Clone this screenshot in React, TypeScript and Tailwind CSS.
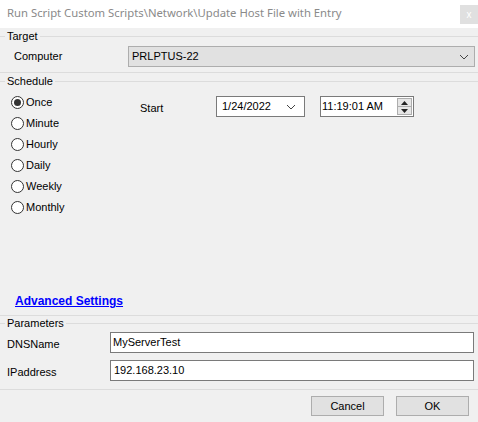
import { FC, ReactNode } from 'react';

const GroupHeader: FC<{ title: string; className?: string }> = ({ title, className = '' }) => (
  <div className={`flex h-[13px] items-center ${className}`}>
    <div className="h-px w-[5px] bg-[#dcdcdc]" />
    <span className="px-[2px] leading-none">{title}</span>
    <div className="h-px flex-1 bg-[#dcdcdc]" />
  </div>
);

const Divider: FC<{ className?: string }> = ({ className = '' }) => (
  <div className={`h-px w-full bg-[#dcdcdc] ${className}`} />
);

const Chevron: FC = () => (
  <svg width="10" height="6" viewBox="0 0 10 6" fill="none">
    <path d="M1 1l4 4 4-4" stroke="#444" strokeWidth="1" />
  </svg>
);

const Radio: FC<{ label: string; checked?: boolean }> = ({ label, checked }) => (
  <div className="flex h-[21px] items-center">
    <div className="flex h-[13px] w-[13px] items-center justify-center rounded-full border border-[#333] bg-white">
      {checked && <div className="h-[7px] w-[7px] rounded-full bg-[#333]" />}
    </div>
    <span className="ml-[2px]">{label}</span>
  </div>
);

const Button: FC<{ children: ReactNode }> = ({ children }) => (
  <div className="flex h-[20px] w-[73px] items-center justify-center border border-[#adadad] bg-[#e1e1e1]">
    {children}
  </div>
);

const App: FC = () => {
  return (
    <div className="h-[422px] w-[478px] overflow-hidden bg-[#f0f0f0] text-[11px] text-black [font-family:'Liberation_Sans',Arial,sans-serif]">
      {/* title bar */}
      <div className="flex h-[28px] items-start bg-white">
        <span className="ml-[7px] mt-[5px] text-[11.3px] text-[#8a8a8a] [font-family:'Noto_Sans','Open_Sans',sans-serif]">
          Run Script Custom Scripts\Network\Update Host File with Entry
        </span>
        <div className="ml-auto mt-[5px] flex h-[19px] w-[18px] items-center justify-center bg-[#e0e0e0] text-[10px] text-white">
          x
        </div>
      </div>

      <GroupHeader title="Target" className="mt-[2px]" />
      <div className="mt-[3px] flex h-[21px] items-center">
        <span className="ml-[14px] w-[114px]">Computer</span>
        <div className="flex h-[21px] w-[347px] items-center justify-between border border-[#adadad] bg-[#e1e1e1] pl-[3px] pr-[5px]">
          <span>PRLPTUS-22</span>
          <Chevron />
        </div>
      </div>
      <Divider className="mt-[5px]" />

      <GroupHeader title="Schedule" className="mt-[2px]" />
      <div className="flex h-[203px]">
        <div className="ml-[11px] mt-[4px] w-[129px]">
          <Radio label="Once" checked />
          <Radio label="Minute" />
          <Radio label="Hourly" />
          <Radio label="Daily" />
          <Radio label="Weekly" />
          <Radio label="Monthly" />
        </div>
        <div className="mt-[8px] flex h-[21px] items-center">
          <span className="w-[76px] pt-[3px]">Start</span>
          <div className="flex h-[21px] w-[89px] items-center justify-between border border-[#7a7a7a] bg-white pl-[5px] pr-[8px]">
            <span>1/24/2022</span>
            <Chevron />
          </div>
          <div className="ml-[15px] flex h-[21px] w-[94px] items-center justify-between border border-[#7a7a7a] bg-white pl-[1px] pr-[1px]">
            <span>11:19:01 AM</span>
            <div className="flex h-[17px] w-[15px] flex-col border border-[#adadad] bg-[#e6e6e6]">
              <div className="flex flex-1 items-center justify-center border-b border-[#adadad]">
                <svg width="7" height="4" viewBox="0 0 7 4">
                  <path d="M0 4L3.5 0L7 4Z" fill="#222" />
                </svg>
              </div>
              <div className="flex flex-1 items-center justify-center">
                <svg width="7" height="4" viewBox="0 0 7 4">
                  <path d="M0 0L3.5 4L7 0Z" fill="#222" />
                </svg>
              </div>
            </div>
          </div>
        </div>
      </div>

      <div className="flex h-[24px] items-start pl-[15px] pt-[1px]">
        <a href="#" className="text-[12px] font-bold text-[#0000ff] underline">
          Advanced Settings
        </a>
      </div>
      <Divider />

      <GroupHeader title="Parameters" className="mt-[1px]" />
      <div className="mt-[2px] flex h-[21px] items-center">
        <span className="ml-[7px] w-[103px] pt-[4px]">DNSName</span>
        <div className="flex h-[21px] w-[364px] items-center border border-[#7a7a7a] bg-white px-[2px]">
          MyServerTest
        </div>
      </div>
      <div className="mt-[7px] flex h-[21px] items-center">
        <span className="ml-[7px] w-[103px] pt-[4px]">IPaddress</span>
        <div className="flex h-[21px] w-[364px] items-center border border-[#7a7a7a] bg-white px-[3px]">
          192.168.23.10
        </div>
      </div>
      <Divider className="mt-[8px]" />

      <div className="mt-[6px] flex justify-end gap-[12px] pr-[9px]">
        <Button>Cancel</Button>
        <Button>OK</Button>
      </div>
    </div>
  );
};

export default App;
